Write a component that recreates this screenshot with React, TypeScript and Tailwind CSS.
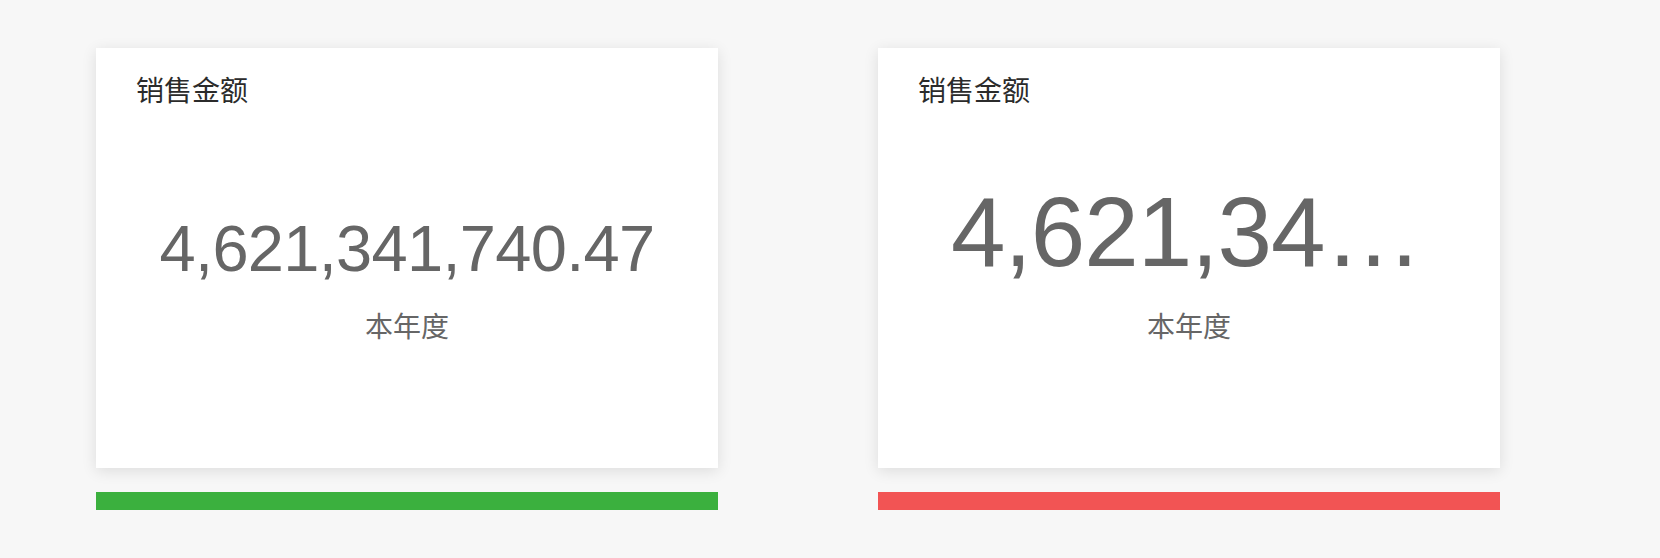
import React from 'react';

type Stat = {
  title: string;
  value: string;
  period: string;
  bar: string;
  big?: boolean;
};

const STATS: Stat[] = [
  { title: '销售金额', value: '4,621,341,740.47', period: '本年度', bar: 'bg-[#3bb03e]' },
  { title: '销售金额', value: '4,621,341,740.47', period: '本年度', bar: 'bg-[#f25454]', big: true },
];

const cjk = { fontFamily: '"Noto Sans CJK SC", "Noto Sans", sans-serif' };
const num = { fontFamily: '"Liberation Sans", Arial, sans-serif' };

const StatCard: React.FC<{ stat: Stat }> = ({ stat }) => (
  <div className="w-[622px] flex flex-col">
    <div className="h-[420px] bg-white shadow-[0_3px_14px_rgba(0,0,0,0.11)] pt-[21px] px-[40px]">
      <div className="text-[28px] leading-[40px] text-[#2b2b2b]" style={cjk}>
        {stat.title}
      </div>

      {/* number sits on the same bottom line in both cards */}
      <div className="h-[172px] flex items-end justify-center">
        {stat.big ? (
          <div
            className="w-[476px] text-[98px] leading-none tracking-[-1px] text-[#666] whitespace-nowrap overflow-hidden text-ellipsis"
            style={num}
          >
            {stat.value}
          </div>
        ) : (
          <div className="text-[65px] leading-none tracking-[-0.7px] text-[#666] whitespace-nowrap text-center" style={num}>
            {stat.value}
          </div>
        )}
      </div>
      <div className="mt-[30px] text-[28px] leading-[28px] text-[#666] text-center" style={cjk}>
        {stat.period}
      </div>
    </div>

    <div className={`mt-[24px] h-[18px] ${stat.bar}`} />
  </div>
);

export default function App() {
  return (
    <div className="w-[1660px] h-[558px] bg-[#f7f7f7] pt-[48px] pl-[96px] flex gap-[160px]">
      {STATS.map((s, i) => (
        <StatCard key={i} stat={s} />
      ))}
    </div>
  );
}
